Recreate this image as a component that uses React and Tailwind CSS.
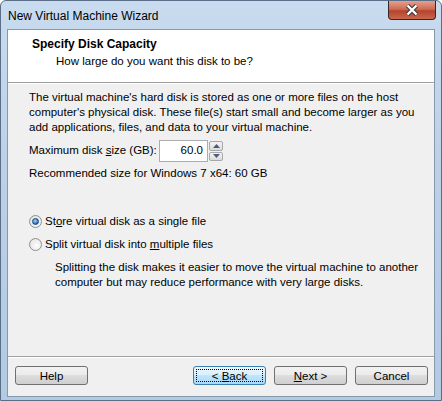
import React from "react";

const font = { fontFamily: '"Liberation Sans", Arial, sans-serif' };

function Btn({ children, focused }) {
  return (
    <div
      className={
        "relative flex h-[19px] w-[73px] items-center justify-center rounded-[3px] border text-[11.5px] text-black " +
        (focused
          ? "border-[#3c7fb1] bg-[linear-gradient(#eaf6fd_0%,#d9f0fc_45%,#bee6fd_50%,#a7d9f5_100%)]"
          : "border-[#707070] bg-[linear-gradient(#f2f2f2_0%,#ebebeb_45%,#dddddd_50%,#cfcfcf_100%)]")
      }
    >
      {focused && (
        <div className="absolute inset-[2px] border border-dotted border-black" />
      )}
      <span className="relative leading-[14px]">{children}</span>
    </div>
  );
}

function Radio({ checked }) {
  return (
    <div className="flex h-[13px] w-[13px] shrink-0 items-center justify-center rounded-full border border-[#8e8f8f] bg-[radial-gradient(circle_at_60%_60%,#ffffff,#dcdcdc)]">
      {checked && (
        <div className="h-[7px] w-[7px] rounded-full border border-[#10477f] bg-[radial-gradient(circle_at_40%_35%,#a9d6f6,#2a6ebd_70%)]" />
      )}
    </div>
  );
}

export default function App() {
  return (
    <div
      style={font}
      className="relative h-[401px] w-[442px] overflow-hidden rounded-t-[6px] border border-[#5a6f87] bg-[linear-gradient(180deg,#c9dbee_0%,#bcd1e8_40%,#b3cae3_100%)]"
    >
      {/* title bar */}
      <div className="flex h-[28px] items-center justify-between pl-[7px]">
        <span className="pt-[1px] text-[12px] text-black">New Virtual Machine Wizard</span>
        <div className="mb-[9px] mr-[5px] flex h-[19px] w-[48px] items-center justify-center self-start rounded-b-[4px] border border-t-0 border-[#3b2523] bg-[linear-gradient(#e3a08e_0%,#cf6c55_45%,#b4452c_55%,#c9674d_100%)]">
          <svg width="14" height="12" viewBox="0 0 14 12">
            <path
              d="M2.5 1.5 L11.5 10.5 M11.5 1.5 L2.5 10.5"
              stroke="#3a3a3a"
              strokeWidth="4.4"
              fill="none"
            />
            <path
              d="M2.5 1.5 L11.5 10.5 M11.5 1.5 L2.5 10.5"
              stroke="#ffffff"
              strokeWidth="2.4"
              fill="none"
            />
          </svg>
        </div>
      </div>

      {/* client area */}
      <div className="mx-[6px] flex h-[368px] flex-col border border-[#8799ad] bg-[#f0f0f0]">
        {/* header */}
        <div className="flex h-[52px] shrink-0 flex-col bg-white pl-[24px] pt-[6px]">
          <div className="text-[12px] font-bold leading-[17px] text-black">Specify Disk Capacity</div>
          <div className="pl-[24px] text-[11.5px] leading-[17px] text-black">How large do you want this disk to be?</div>
        </div>
        <div className="h-px shrink-0 bg-[#a0a0a0]" />
        <div className="h-px shrink-0 bg-white" />

        {/* body */}
        <div className="flex min-h-0 flex-1 flex-col overflow-hidden whitespace-nowrap pl-[21px] pt-[6px] text-[11.5px] text-black">
          <div className="leading-[15px]">
            The virtual machine's hard disk is stored as one or more files on the host
            <br />
            computer's physical disk. These file(s) start small and become larger as you
            <br />
            add applications, files, and data to your virtual machine.
          </div>

          <div className="mt-[5px] flex h-[22px] items-center">
            <span className="w-[130px] shrink-0">
              Maximum disk <span className="underline">s</span>ize (GB):
            </span>
            <div className="flex h-[22px] w-[49px] shrink-0 items-center justify-end border border-[#abadb3] bg-white pr-[4px]">
              60.0
            </div>
            <div className="ml-[1px] flex h-[22px] w-[14px] shrink-0 flex-col gap-px py-[1px]">
              <div className="flex h-[10px] items-center justify-center rounded-[2px] border border-[#a8a8a8] bg-[linear-gradient(#f4f4f4,#dcdcdc)]">
                <svg width="7" height="4" viewBox="0 0 7 4"><path d="M0 4 L3.5 0 L7 4 Z" fill="#4a5c82" /></svg>
              </div>
              <div className="flex h-[10px] items-center justify-center rounded-[2px] border border-[#a8a8a8] bg-[linear-gradient(#f4f4f4,#dcdcdc)]">
                <svg width="7" height="4" viewBox="0 0 7 4"><path d="M0 0 L3.5 4 L7 0 Z" fill="#4a5c82" /></svg>
              </div>
            </div>
          </div>

          <div className="mt-[4px] leading-[15px]">Recommended size for Windows 7 x64: 60 GB</div>

          <div className="mt-[33px] flex h-[15px] items-center gap-[3px]">
            <Radio checked />
            <span>
              St<span className="underline">o</span>re virtual disk as a single file
            </span>
          </div>
          <div className="mt-[8px] flex h-[15px] items-center gap-[3px]">
            <Radio />
            <span>
              Split virtual disk into <span className="underline">m</span>ultiple files
            </span>
          </div>
          <div className="mt-[8px] pl-[26px] leading-[15px]">
            Splitting the disk makes it easier to move the virtual machine to another
            <br />
            computer but may reduce performance with very large disks.
          </div>
        </div>

        <div className="h-px shrink-0 bg-[#a0a0a0]" />
        <div className="h-px shrink-0 bg-white" />
        {/* buttons */}
        <div className="flex h-[38px] shrink-0 items-start pl-[7px] pr-[6px] pt-[8px]">
          <Btn>Help</Btn>
          <div className="flex-1" />
          <div className="flex gap-[8px]">
            <Btn focused>
              &lt; <span className="underline">B</span>ack
            </Btn>
            <Btn>
              <span className="underline">N</span>ext &gt;
            </Btn>
            <Btn>Cancel</Btn>
          </div>
        </div>
      </div>
    </div>
  );
}
